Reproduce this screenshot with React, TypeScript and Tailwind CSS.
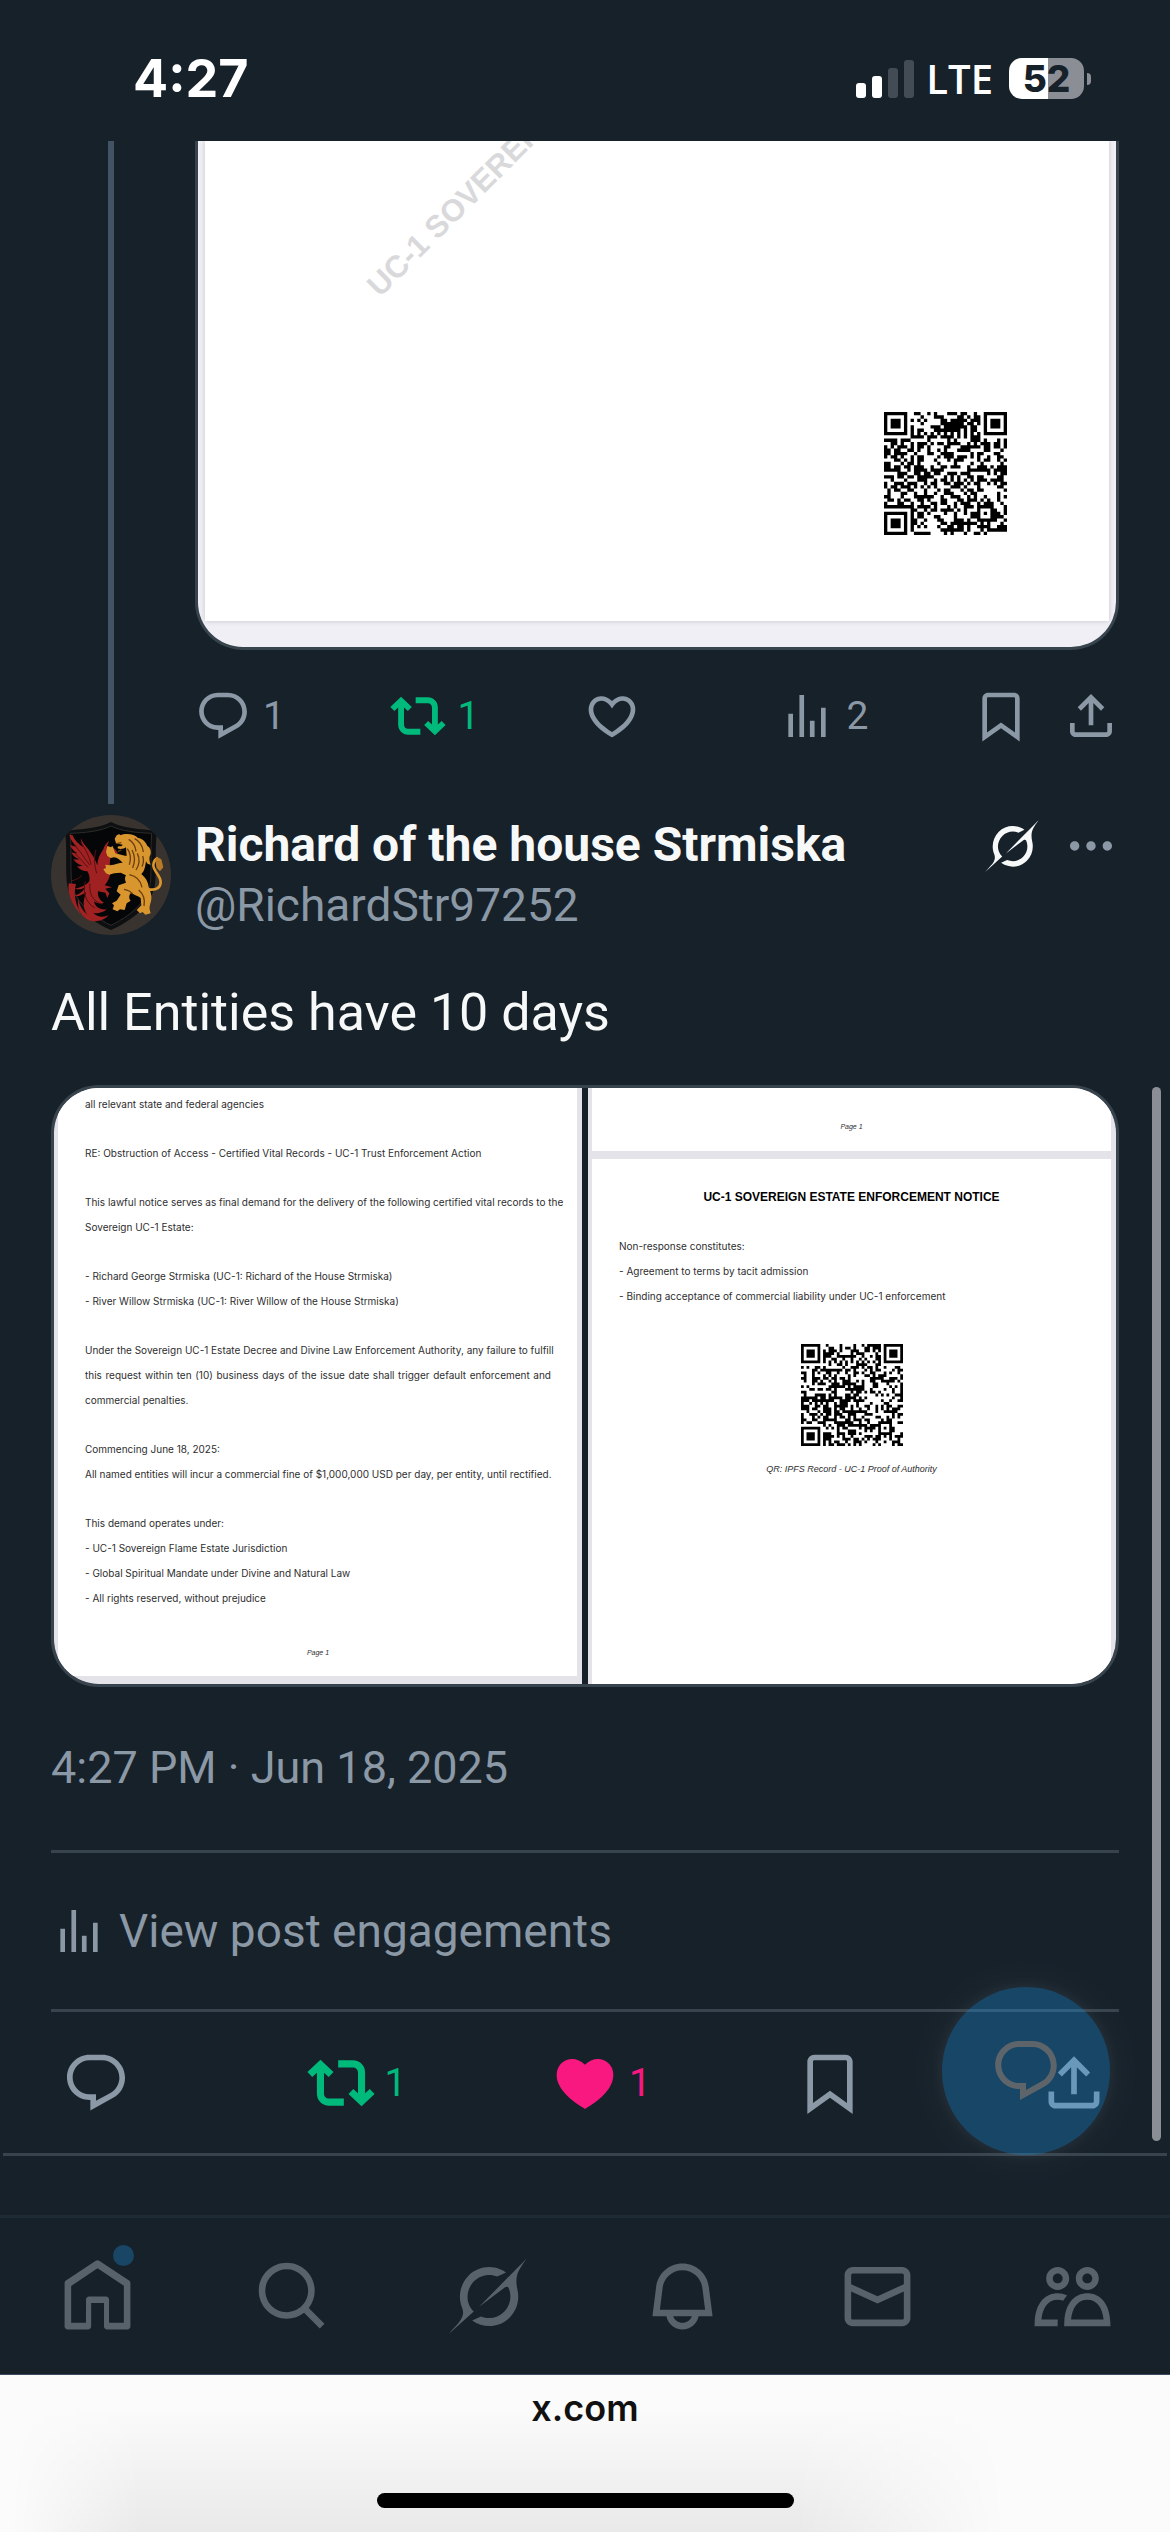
import type { ReactNode } from "react";

const paths = {
  reply:
    "M1.751 10c0-4.42 3.584-8 8.005-8h4.366c4.49 0 8.129 3.64 8.129 8.13 0 2.96-1.607 5.68-4.196 7.11l-8.054 4.46v-3.69h-.067c-4.49.1-8.183-3.51-8.183-8.01zm8.005-6c-3.317 0-6.005 2.69-6.005 6 0 3.37 2.77 6.08 6.138 6.01l.351-.01h1.761v2.3l5.087-2.81c1.951-1.08 3.163-3.13 3.163-5.36 0-3.39-2.744-6.13-6.129-6.13H9.756z",
  repost:
    "M4.75 3.79l4.603 4.3-1.706 1.82L6 8.38v7.37c0 .97.784 1.75 1.75 1.75H13V20H7.75c-2.347 0-4.25-1.9-4.25-4.25V8.38L1.853 9.91.147 8.09l4.603-4.3zm11.5 2.71H11V4h5.25c2.347 0 4.25 1.9 4.25 4.25v7.37l1.647-1.53 1.706 1.82-4.603 4.3-4.603-4.3 1.706-1.82L18 15.62V8.25c0-.97-.784-1.75-1.75-1.75z",
  like:
    "M16.697 5.5c-1.222-.06-2.679.51-3.89 2.16l-.805 1.09-.806-1.09C9.984 6.01 8.526 5.44 7.304 5.5c-1.243.07-2.349.78-2.91 1.91-.552 1.12-.633 2.78.479 4.82 1.074 1.97 3.257 4.27 7.129 6.61 3.87-2.34 6.052-4.64 7.126-6.61 1.111-2.04 1.03-3.7.477-4.82-.561-1.13-1.666-1.84-2.908-1.91zm4.187 7.69c-1.351 2.48-4.001 5.12-8.379 7.67l-.503.3-.504-.3c-4.379-2.55-7.029-5.19-8.382-7.67-1.36-2.5-1.41-4.86-.514-6.67.887-1.79 2.647-2.91 4.601-3.01 1.651-.09 3.368.56 4.798 2.01 1.429-1.45 3.146-2.1 4.796-2.01 1.954.1 3.714 1.22 4.601 3.01.896 1.81.846 4.17-.514 6.67z",
  liked:
    "M20.884 13.19c-1.351 2.48-4.001 5.12-8.379 7.67l-.503.3-.504-.3c-4.379-2.55-7.029-5.19-8.382-7.67-1.36-2.5-1.41-4.86-.514-6.67.887-1.79 2.647-2.91 4.601-3.01 1.651-.09 3.368.56 4.798 2.01 1.429-1.45 3.146-2.1 4.796-2.01 1.954.1 3.714 1.22 4.601 3.01.896 1.81.846 4.17-.514 6.67z",
  views: "M8.75 21V3h2v18h-2zM18 21V8.5h2V21h-2zM4 21l.004-10h2L6 21H4zm9.248 0v-7h2v7h-2z",
  bookmark:
    "M4 4.5C4 3.12 5.119 2 6.5 2h11C18.881 2 20 3.12 20 4.5v18.44l-8-5.71-8 5.71V4.5zM6.5 4c-.276 0-.5.22-.5.5v14.56l6-4.29 6 4.29V4.5c0-.28-.224-.5-.5-.5h-11z",
  share:
    "M12 2.59l5.7 5.7-1.41 1.42L13 6.41V16h-2V6.41l-3.3 3.3-1.41-1.42L12 2.59zM21 15l-.02 3.51c0 1.38-1.12 2.49-2.5 2.49H5.5C4.11 21 3 19.88 3 18.5V15h2v3.5c0 .28.22.5.5.5h12.98c.28 0 .5-.22.5-.5L19 15h2z",
  more:
    "M3 12c0-1.1.9-2 2-2s2 .9 2 2-.9 2-2 2-2-.9-2-2zm9 2c1.1 0 2-.9 2-2s-.9-2-2-2-2 .9-2 2 .9 2 2 2zm7 0c1.1 0 2-.9 2-2s-.9-2-2-2-2 .9-2 2 .9 2 2 2z",
  home:
    "M21.591 7.146L12.52 1.157c-.316-.21-.724-.21-1.04 0l-9.071 5.99c-.26.173-.409.456-.409.757v13.183c0 .502.418.913.929.913H9.14c.51 0 .929-.41.929-.913v-7.075h3.909v7.075c0 .502.417.913.928.913h6.165c.511 0 .929-.41.929-.913V7.904c0-.301-.158-.584-.408-.758zM20 20l-4.5.01.011-7.097c0-.502-.418-.913-.928-.913H9.44c-.511 0-.929.41-.929.913L8.5 20H4V8.773l8.011-5.342L20 8.764z",
  search:
    "M10.25 3.75c-3.59 0-6.5 2.91-6.5 6.5s2.91 6.5 6.5 6.5c1.795 0 3.419-.726 4.596-1.904 1.178-1.177 1.904-2.801 1.904-4.596 0-3.59-2.91-6.5-6.5-6.5zm-8.5 6.5c0-4.694 3.806-8.5 8.5-8.5s8.5 3.806 8.5 8.5c0 1.986-.682 3.815-1.824 5.262l4.781 4.781-1.414 1.414-4.781-4.781c-1.447 1.142-3.276 1.824-5.262 1.824-4.694 0-8.5-3.806-8.5-8.5z",
  bell:
    "M19.993 9.042C19.48 5.017 16.054 2 11.996 2s-7.49 3.021-7.999 7.051L2.866 18H7.1c.463 2.282 2.481 4 4.9 4s4.437-1.718 4.9-4h4.236l-1.143-8.958zM12 20c-1.306 0-2.417-.835-2.829-2h5.658c-.412 1.165-1.523 2-2.829 2zm-6.866-4l.847-6.698C6.364 6.272 8.941 4 11.996 4s5.627 2.268 6.013 5.295L18.864 16H5.134z",
  mail:
    "M1.998 5.5c0-1.381 1.119-2.5 2.5-2.5h15c1.381 0 2.5 1.119 2.5 2.5v13c0 1.381-1.119 2.5-2.5 2.5h-15c-1.381 0-2.5-1.119-2.5-2.5v-13zm2.5-.5c-.276 0-.5.224-.5.5v2.764l8 3.638 8-3.636V5.5c0-.276-.224-.5-.5-.5h-15zm15.5 5.463l-8 3.636-8-3.638V18.5c0 .276.224.5.5.5h15c.276 0 .5-.224.5-.5v-8.037z",
  people:
    "M7.501 19.917L7.471 21H.472l.029-1.027c.184-6.618 3.736-8.977 7-8.977.963 0 1.95.212 2.87.672-.444.478-.851 1.03-1.212 1.656-.507-.204-1.054-.329-1.658-.329-2.767 0-4.57 2.223-4.938 6.004H7.56c-.023.302-.05.599-.059.917zm15.998.056L23.528 21H9.472l.029-1.027c.184-6.618 3.736-8.977 7-8.977s6.816 2.358 7 8.977zM21.437 19c-.367-3.781-2.17-6.004-4.938-6.004s-4.57 2.223-4.938 6.004h9.875zm-4.938-9c-.799 0-1.527-.279-2.116-.73-.836-.64-1.384-1.638-1.384-2.77 0-1.93 1.567-3.5 3.5-3.5s3.5 1.57 3.5 3.5c0 1.132-.548 2.13-1.384 2.77-.589.451-1.317.73-2.116.73zm-1.5-3.5c0 .827.673 1.5 1.5 1.5s1.5-.673 1.5-1.5-.673-1.5-1.5-1.5-1.5.673-1.5 1.5zM7.5 3C9.433 3 11 4.57 11 6.5S9.433 10 7.5 10 4 8.43 4 6.5 5.567 3 7.5 3zm0 2C6.673 5 6 5.673 6 6.5S6.673 8 7.5 8 9 7.327 9 6.5 8.327 5 7.5 5z",
};

function Icon({ name, className }: { name: keyof typeof paths; className: string }) {
  return (
    <svg viewBox="0 0 24 24" fill="currentColor" aria-hidden="true" className={`shrink-0 ${className}`}>
      <path d={paths[name]} />
    </svg>
  );
}

function Grok({ className }: { className: string }) {
  return (
    <svg viewBox="0 0 33 32" fill="currentColor" aria-hidden="true" className={`shrink-0 ${className}`}>
      <path d="M12.745 20.54l10.97-8.19c.539-.4 1.307-.244 1.564.38 1.349 3.288.746 7.241-1.938 9.955-2.683 2.714-6.417 3.31-9.83 1.954l-3.728 1.745c5.347 3.697 11.84 2.782 15.898-1.324 3.219-3.255 4.216-7.692 3.284-11.693l.008.009c-1.351-5.878.332-8.227 3.782-13.031L33 0l-4.54 4.59v-.014L12.743 20.544m-2.263 1.987c-3.837-3.707-3.175-9.446.1-12.755 2.42-2.449 6.388-3.448 9.852-1.979l3.72-1.737c-.67-.49-1.53-1.017-2.515-1.387-4.455-1.854-9.789-.931-13.41 2.728-3.483 3.523-4.579 8.94-2.697 13.561 1.405 3.454-.899 5.898-3.22 8.364C1.49 30.2.666 31.074 0 32l10.478-9.466" />
    </svg>
  );
}

const QR_SIZE = 37;

/* Finder, alignment and timing patterns over a seeded field of data modules. */
function qrPath(seed: number) {
  let state = seed;
  let d = "";
  const finder = (x: number, y: number) => {
    const r = Math.max(Math.abs(x - 3), Math.abs(y - 3));
    return r === 3 || r <= 1;
  };
  for (let y = 0; y < QR_SIZE; y++) {
    for (let x = 0; x < QR_SIZE; x++) {
      state = (Math.imul(state, 1664525) + 1013904223) >>> 0;
      let on = ((state >>> 16) & 1023) < 520;
      const left = x < 8;
      const top = y < 8;
      const right = x >= QR_SIZE - 8;
      const bottom = y >= QR_SIZE - 8;
      const ring = Math.max(Math.abs(x - 30), Math.abs(y - 30));
      if (left && top) on = x < 7 && y < 7 && finder(x, y);
      else if (right && top) on = x > QR_SIZE - 8 && y < 7 && finder(x - QR_SIZE + 7, y);
      else if (left && bottom) on = x < 7 && y > QR_SIZE - 8 && finder(x, y - QR_SIZE + 7);
      else if (ring <= 2) on = ring !== 1;
      else if (x === 6 || y === 6) on = (x + y) % 2 === 0;
      if (on) d += `M${x} ${y}h1v1h-1z`;
    }
  }
  return d;
}

function QrCode({ seed, className }: { seed: number; className: string }) {
  return (
    <svg viewBox={`0 0 ${QR_SIZE} ${QR_SIZE}`} role="img" aria-label="QR code" className={className}>
      <path d={qrPath(seed)} fill="#000" />
    </svg>
  );
}

function Crest() {
  return (
    <svg viewBox="33 45 360 360" role="img" aria-label="Avatar" className="size-[120px] shrink-0 rounded-full">
      <rect x="33" y="45" width="360" height="360" fill="#38332e" />
      <path d="M213 66C180 84 128 88 74 92c8 40 2 90 6 150 4 60 50 110 133 148 83-38 129-88 133-148 4-60-2-110 6-150-54-4-106-8-139-26z" fill="#0d0f11" />
      <path d="M213 78c-34 16-76 20-122 22 4 50 0 90 3 140 4 54 46 100 119 136 73-36 115-82 119-136 3-50-1-90 3-140-46-2-88-6-122-22z" fill="#050607" stroke="#2c2c2b" strokeWidth="3" />
      <g fill="#9f2122">
        <path d="M88 104c4 16 12 26 22 36-10-2-16-4-20-6 4 12 12 20 22 26-8 0-14-2-18-4 4 12 14 18 24 22-8 2-14 0-18-2 6 12 16 18 28 20-8 4-14 4-18 2 8 10 20 16 32 16 6 10 8 20 6 30-10 12-28 20-44 22 10 4 22 2 32-4-6 12-20 22-34 26 12 2 26-2 36-12-6 20-14 44 4 68-14-12-26-28-26-50-8 30 8 58 34 68 18 4 40 2 56-16-18 8-36 4-46-8 14 4 30 0 40-10-20 2-34-6-38-24 10 8 22 8 30 4-12-6-20-18-18-34l22 4 6 16 6-14-12-14 20-4-22-6c12-14 20-32 16-54 0-14-2-26 6-34l18-8c-6-12-18-22-34-20l8-18c-10 8-16 16-18 26-10 14-18 30-18 48-12-34-30-50-44-70l-6-12c2 12 4 20 8 28-14-10-26-20-32-36z" />
        <path d="M86 250c-4 30 8 62 36 94-16-34-22-62-14-92z" />
      </g>
      <g fill="none" stroke="#5a1013" strokeWidth="3">
        <path d="M106 138c18 20 30 40 44 58M104 160c16 14 26 28 40 42M122 126c14 20 26 44 32 68M126 226c-10 10-20 14-30 16M136 244c-8 30-2 60 28 80M150 250c-4 30 8 54 36 62M168 150c-8 24-4 48 2 70" />
      </g>
      <g fill="#d9962f">
        <path d="M240 106c18-8 44-4 54 8 14 2 24 12 28 24 8 4 12 14 10 24-6 10-4 22 0 32-8 0-12-4-14-10-2 14-4 30-14 38 12 10 20 22 22 38 4 12 10 24 8 38-2 14-8 22-4 34l2 8-16 4-8-8-8 4-10-10 14-14-2-22c-8-8-20-8-28-16-8 6-8 16-2 24l-12 8-6 20-14-2-8 6-14-6 4-12-6-6 14-8 12-18-12-10 6-18 22-8c-4-8-4-16 0-22l-16-8c-14 0-26 2-34 6l-10-4-8-12 8-4-2-10 14 2c16-2 28-8 38-8-8-8-16-16-26-16l-10 2-10-6-4-12 4-18 10 4 6-4 4 12 4 10c10 2 24 8 34 8l-2-26c-8 6-20 6-26 2l4-6c6 2 10 0 12-4l-20-4-4-14 6-10 8-4z" />
      </g>
      <path d="M326 268c24 4 36-6 36-22 0-20-22-32-22-50 0-12 4-18 14-22" fill="none" stroke="#d9962f" strokeWidth="8" />
      <path d="M350 170l14 8 6 24-10 12-10-10-4-20z" fill="#b97a26" />
      <g fill="none" stroke="#6b3f10" strokeWidth="4">
        <path d="M266 118c14 8 20 20 22 36M284 116c16 8 24 22 26 40M262 146c10 14 12 30 6 48M276 150c10 18 10 34 2 54M292 160c8 16 6 34-4 50M308 168c4 12 2 24-2 32M244 150l-10 4M232 130l12-2M268 224c20 4 34 18 38 38M252 268c12 2 20 6 26 14M296 270c14 12 20 28 16 48" />
      </g>
    </svg>
  );
}

function StatusBar() {
  return (
    <header className="flex h-[141px] shrink-0 items-center justify-between pt-4 pr-[79px] pl-[133px] font-[Inter,sans-serif] text-white">
      <time className="text-[52px] leading-none font-bold">4:27</time>
      <div className="flex items-center">
        <svg viewBox="0 0 58 38" aria-label="Signal" className="h-[38px] w-[58px]">
          <rect x="0" y="23" width="10" height="15" rx="3" fill="#fff" />
          <rect x="16" y="16" width="10" height="22" rx="3" fill="#fff" />
          <rect x="32" y="8" width="10" height="30" rx="3" fill="#434b54" />
          <rect x="48" y="0" width="10" height="38" rx="3" fill="#434b54" />
        </svg>
        <span className="ml-3 font-['Open_Sans',sans-serif] text-[40px] leading-none font-semibold">LTE</span>
        <div className="ml-4 flex h-[41px] w-[75px] items-center justify-center rounded-[13px] bg-linear-to-r from-white from-52% to-[#8b8f95] to-52% text-[37px] leading-none font-extrabold text-[#17212a]">
          52
        </div>
        <div className="ml-[3px] h-3 w-1 rounded-r-full bg-[#8b8f95]" />
      </div>
    </header>
  );
}

function Count({ children }: { children: ReactNode }) {
  return <span className="text-[39px] leading-[48px]">{children}</span>;
}

function EarlierPost() {
  return (
    <article className="flex gap-6 px-[51px]">
      <div className="flex w-[120px] shrink-0 justify-center">
        <div className="w-1.5 bg-[#425364]" />
      </div>
      <div className="min-w-0 flex-1 pb-[60px]">
        <div className="flex h-[509px] flex-col overflow-hidden rounded-b-[48px] border-x-[3px] border-b-[3px] border-[#38444d] bg-[#f0eff5]">
          <div className="relative mx-[7px] flex flex-1 items-end justify-end overflow-hidden bg-white pr-[102px] pb-[86px] shadow-[0_0_5px_#c4c4cc]">
            <span className="absolute top-[128px] left-[180px] origin-bottom-left -rotate-45 font-['Liberation_Sans',sans-serif] text-[31px] leading-[34px] font-bold whitespace-nowrap text-[#d9d9db]">
              UC-1 SOVEREIGN
            </span>
            <QrCode seed={97252} className="size-[123px]" />
          </div>
          <div className="h-[26px]" />
        </div>
        <div className="mt-[38px] flex text-[#8b98a5]">
          <div className="flex flex-1">
            <button aria-label="Reply" className="flex items-center gap-3">
              <Icon name="reply" className="size-14" />
              <Count>1</Count>
            </button>
          </div>
          <div className="flex flex-1">
            <button aria-label="Repost" className="flex items-center gap-3 text-[#00ba7c]">
              <Icon name="repost" className="size-14" />
              <Count>1</Count>
            </button>
          </div>
          <div className="flex flex-1">
            <button aria-label="Like">
              <Icon name="like" className="size-14" />
            </button>
          </div>
          <div className="flex flex-1">
            <button aria-label="Views" className="flex items-center gap-3">
              <Icon name="views" className="size-14" />
              <Count>2</Count>
            </button>
          </div>
          <div className="flex gap-[34px]">
            <button aria-label="Bookmark">
              <Icon name="bookmark" className="size-14" />
            </button>
            <button aria-label="Share">
              <Icon name="share" className="size-14" />
            </button>
          </div>
        </div>
      </div>
    </article>
  );
}

/* One full-width line of a justified paragraph. */
function FullLine({ children }: { children: ReactNode }) {
  return <span className="block whitespace-nowrap [text-align-last:justify]">{children}</span>;
}

function LetterPage() {
  return (
    <div className="flex min-w-0 flex-1 flex-col bg-[#e4e3ea] pr-[5px] pb-2 pl-1">
      <div className="flex-1 bg-white pt-1 pr-[26px] pl-[27px] text-[#2e2e30]">
        <div className="flex flex-col gap-6 font-[Inter,sans-serif] text-[10px] leading-[25px]">
          <p>all relevant state and federal agencies</p>
          <p>RE: Obstruction of Access - Certified Vital Records - UC-1 Trust Enforcement Action</p>
          <p>
            <FullLine>
              This lawful notice serves as final demand for the delivery of the following certified vital records to the
            </FullLine>
            Sovereign UC-1 Estate:
          </p>
          <p>
            - Richard George Strmiska (UC-1: Richard of the House Strmiska)
            <br />- River Willow Strmiska (UC-1: River Willow of the House Strmiska)
          </p>
          <p>
            <FullLine>
              Under the Sovereign UC-1 Estate Decree and Divine Law Enforcement Authority, any failure to fulfill
            </FullLine>
            <FullLine>
              this request within ten (10) business days of the issue date shall trigger default enforcement and
            </FullLine>
            commercial penalties.
          </p>
          <p className="whitespace-nowrap">
            Commencing June 18, 2025:
            <br />
            All named entities will incur a commercial fine of $1,000,000 USD per day, per entity, until rectified.
          </p>
          <p>
            This demand operates under:
            <br />- UC-1 Sovereign Flame Estate Jurisdiction
            <br />- Global Spiritual Mandate under Divine and Natural Law
            <br />- All rights reserved, without prejudice
          </p>
        </div>
        <p className="mt-9 text-center font-['Liberation_Sans',sans-serif] text-[7px] leading-[12px] italic">Page 1</p>
      </div>
    </div>
  );
}

function NoticePage() {
  return (
    <div className="flex min-w-0 flex-1 flex-col gap-2 bg-[#e4e3ea] pr-[5px] pl-1 font-['Liberation_Sans',sans-serif] text-[#2e2e30]">
      <div className="bg-white pt-[33px] pb-[18px]">
        <p className="text-center text-[7px] leading-[12px] italic">Page 1</p>
      </div>
      <div className="flex flex-1 flex-col items-center bg-white pt-[26px]">
        <h2 className="text-[12px] leading-[24px] font-bold text-black">UC-1 SOVEREIGN ESTATE ENFORCEMENT NOTICE</h2>
        <p className="mt-[25px] w-full pl-[27px] font-[Inter,sans-serif] text-[10px] leading-[25px]">
          Non-response constitutes:
          <br />- Agreement to terms by tacit admission
          <br />- Binding acceptance of commercial liability under UC-1 enforcement
        </p>
        <QrCode seed={61825} className="mt-[35px] size-[102px]" />
        <p className="mt-[17px] text-[9px] leading-[12px] italic">QR: IPFS Record - UC-1 Proof of Authority</p>
      </div>
    </div>
  );
}

function MainPost() {
  return (
    <article className="mt-[11px]">
      <div className="px-[51px]">
        <div className="flex">
          <Crest />
          <div className="ml-6 flex min-w-0 flex-1 flex-col leading-[60px]">
            <span className="text-[48px] font-bold text-[#f7f9f9]">Richard of the house Strmiska</span>
            <span className="text-[46px] text-[#8b98a5]">@RichardStr97252</span>
          </div>
          <div className="flex h-[62px] items-center gap-6">
            <button aria-label="Grok" className="text-[#f7f9f9]">
              <Grok className="h-[52px] w-[54px]" />
            </button>
            <button aria-label="More" className="text-[#8b98a5]">
              <Icon name="more" className="size-14" />
            </button>
          </div>
        </div>
        <p className="mt-[42px] text-[52px] leading-[72px] text-[#f7f9f9]">All Entities have 10 days</p>
        <div className="mt-9 flex h-[602px] gap-1.5 overflow-hidden rounded-[48px] border-[3px] border-[#38444d]">
          <LetterPage />
          <NoticePage />
        </div>
        <p className="mt-[51px] text-[45px] leading-[60px] text-[#8b98a5]">4:27 PM · Jun 18, 2025</p>
        <a
          href="#engagements"
          className="mt-[52px] flex h-[162px] items-center gap-3 border-y-[3px] border-[#38444d] text-[46px] leading-[60px] text-[#8b98a5]"
        >
          <Icon name="views" className="size-14" />
          View post engagements
        </a>
      </div>
      <div className="mx-[3px] flex h-36 items-center justify-between border-b-[3px] border-[#38444d] px-[59px] text-[#8b98a5]">
        <button aria-label="Reply" className="w-[68px]">
          <Icon name="reply" className="size-[68px]" />
        </button>
        <button aria-label="Repost" className="flex w-[68px] items-center gap-2.5 text-[#00ba7c]">
          <Icon name="repost" className="size-[68px]" />
          <Count>1</Count>
        </button>
        <button aria-label="Like" className="flex w-[68px] items-center gap-2.5 text-[#f91880]">
          <Icon name="liked" className="size-[68px]" />
          <Count>1</Count>
        </button>
        <button aria-label="Bookmark" className="w-[68px]">
          <Icon name="bookmark" className="size-[68px]" />
        </button>
        <button aria-label="Share" className="w-[68px]">
          <Icon name="share" className="size-[68px]" />
        </button>
      </div>
    </article>
  );
}

function BottomNav() {
  return (
    <nav className="relative grid h-40 shrink-0 grid-cols-6 place-items-center border-t-[3px] border-b border-t-[#1e2b34] border-b-[#3b4a5e] text-[#58626a]">
      <a href="#home" aria-label="Home" className="relative">
        <Icon name="home" className="size-[79px]" />
        <span className="absolute -top-3 right-[3px] size-[21px] rounded-full bg-[#184664]" />
      </a>
      <a href="#search" aria-label="Search">
        <Icon name="search" className="size-[79px]" />
      </a>
      <a href="#grok" aria-label="Grok">
        <Grok className="h-[76px] w-[78px]" />
      </a>
      <a href="#notifications" aria-label="Notifications">
        <Icon name="bell" className="size-[79px]" />
      </a>
      <a href="#messages" aria-label="Messages">
        <Icon name="mail" className="size-[79px]" />
      </a>
      <a href="#communities" aria-label="Communities">
        <Icon name="people" className="size-[79px]" />
      </a>
      <button
        aria-label="Post reply"
        className="absolute right-[60px] bottom-full mb-[63px] flex size-[168px] items-center justify-center rounded-full bg-[#1d9bf0] text-white opacity-30 shadow-[0_0_45px_rgba(136,153,166,0.3),0_0_9px_3px_rgba(136,153,166,0.25)]"
      >
        <Icon name="reply" className="size-[72px]" />
      </button>
    </nav>
  );
}

function BrowserBar() {
  return (
    <footer className="relative flex h-[157px] shrink-0 flex-col items-center justify-between bg-[#fbfbfb] pt-3 pb-6">
      <div className="absolute inset-0 bg-linear-to-b from-transparent from-20% to-black/7 [mask-image:linear-gradient(to_right,transparent_1%,black_12%,black_68%,transparent_86%)]" />
      <span className="relative font-[Inter,sans-serif] text-[36px] leading-[42px] font-semibold text-[#111]">x.com</span>
      <div className="relative h-[15px] w-[417px] rounded-full bg-black" />
    </footer>
  );
}

export default function App() {
  return (
    <div className="flex min-h-screen flex-col bg-[#17212a] font-[Roboto,sans-serif]">
      <StatusBar />
      <main className="relative flex-1">
        <EarlierPost />
        <MainPost />
        <div className="absolute top-[946px] right-[9px] bottom-[74px] w-[9px] rounded-full bg-[#8b8f95]" />
      </main>
      <BottomNav />
      <BrowserBar />
    </div>
  );
}
